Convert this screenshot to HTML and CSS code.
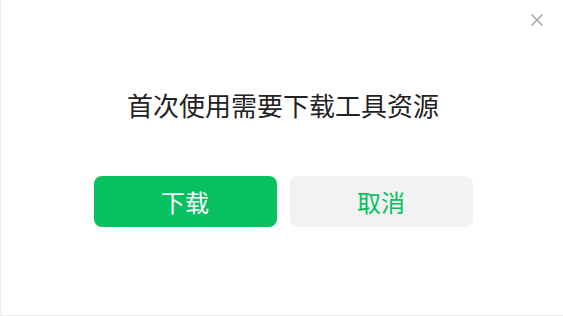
FILE: index.html
```html
<!DOCTYPE html>
<html lang="zh">
<head>
    <meta charset="UTF-8">
    <meta name="viewport" content="width=device-width, initial-scale=1.0">
    <title>下载工具资源</title>
    <link rel="stylesheet" href="styles.css">
</head>
<body>
    <div id="dialog">
        <button class="close" aria-label="关闭">
            <svg width="12" height="12" viewBox="0 0 12 12">
                <path d="M0.5 0.5 L11.5 11.5 M11.5 0.5 L0.5 11.5" stroke="#a3a3a3" stroke-width="1.5" fill="none"/>
            </svg>
        </button>
        <div class="message">首次使用需要下载工具资源</div>
        <div class="actions">
            <button class="btn btn-primary">下载</button>
            <button class="btn btn-cancel">取消</button>
        </div>
    </div>
</body>
</html>
```

FILE: styles.css
```css
body {
    font-family: "Noto Sans CJK SC", "Liberation Sans", sans-serif;
    background: #fff;
    color: #222;
    margin: 0;
}

#dialog {
    width: 563px;
    height: 316px;
    box-sizing: border-box;
    border-left: 1px solid #ececec;
    border-bottom: 1px solid #ececec;
    position: relative;
    display: flex;
    flex-direction: column;
    align-items: center;
    padding-top: 86px;
}

.close {
    position: absolute;
    top: 14px;
    right: 20px;
    width: 12px;
    height: 12px;
    padding: 0;
    border: none;
    background: none;
    cursor: pointer;
    display: flex;
}

.message {
    font-size: 26px;
    line-height: 38px;
    padding-left: 2px;
}

.actions {
    display: flex;
    gap: 13px;
    margin-top: 52px;
    padding-left: 2px;
}

.btn {
    width: 183px;
    height: 51px;
    border: none;
    border-radius: 8px;
    font-family: inherit;
    font-size: 24px;
    cursor: pointer;
}

.btn-primary {
    background: #07c160;
    color: #fff;
}

.btn-cancel {
    background: #f2f2f2;
    color: #07c160;
}
```
